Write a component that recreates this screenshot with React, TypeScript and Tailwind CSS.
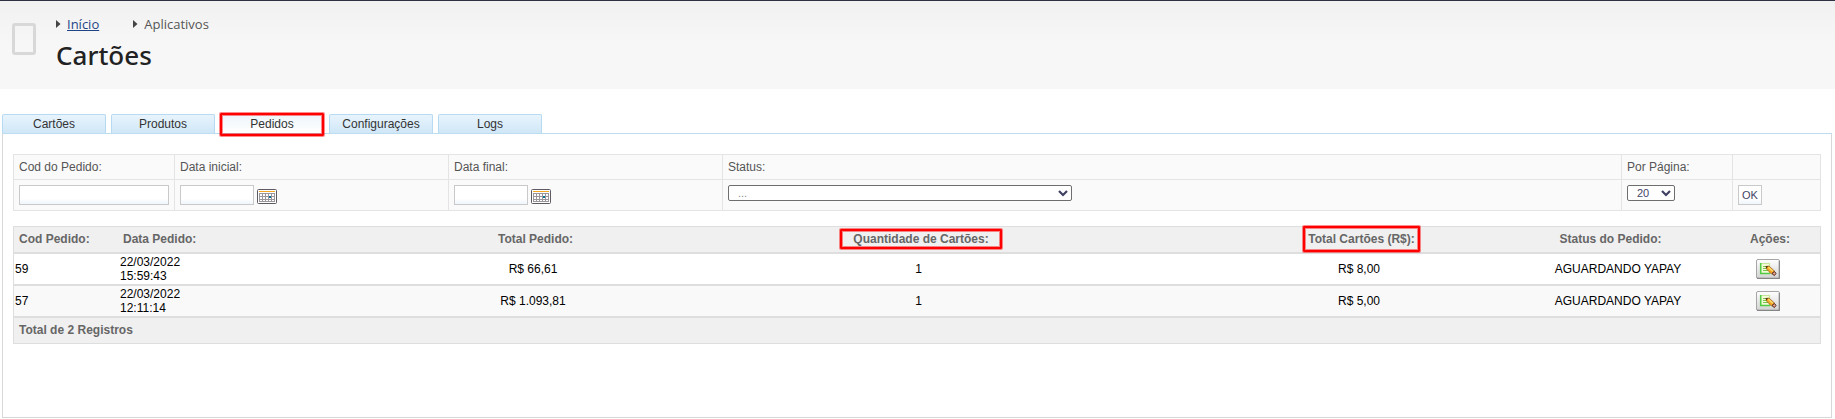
import { useState } from 'react';

const tabs = ['Cartões', 'Produtos', 'Pedidos', 'Configurações', 'Logs'];

const orders = [
  { id: '59', date: '22/03/2022', time: '15:59:43', total: 'R$ 66,61', qty: '1', cardsTotal: 'R$ 8,00', status: 'AGUARDANDO YAPAY' },
  { id: '57', date: '22/03/2022', time: '12:11:14', total: 'R$ 1.093,81', qty: '1', cardsTotal: 'R$ 5,00', status: 'AGUARDANDO YAPAY' },
];

const inputClass = 'h-5 border border-[#c9c9c9] bg-linear-to-b from-white from-70% to-[#eef6fc] px-1 text-xs text-[#444466] outline-none';
const filterHead = 'h-[25px] border border-[#e4e4e4] px-[5px] text-left align-middle font-normal';
const filterCell = 'border border-[#e4e4e4] px-[5px] py-[5px] align-top h-[31px]';

function Caret() {
  return (
    <svg viewBox="0 0 5 8" className="h-2 w-[5px] shrink-0" aria-hidden="true">
      <path d="M0 0 L4.5 4 L0 8 Z" fill="#444" />
    </svg>
  );
}

function Chevron() {
  return (
    <svg viewBox="0 0 10 7" className="pointer-events-none absolute right-1 top-[5px] h-[7px] w-[10px]" aria-hidden="true">
      <path d="M1 1 L5 5 L9 1" fill="none" stroke="#3f4162" strokeWidth="2.2" />
    </svg>
  );
}

function CalendarIcon() {
  return (
    <svg viewBox="0 0 20 15" className="h-[15px] w-5" aria-hidden="true">
      <rect x="0.5" y="0.5" width="19" height="14" rx="1" fill="#fff" stroke="#5e5a62" />
      <rect x="2" y="2" width="16" height="1" fill="#f5a623" />
      <path d="M2 4.5 H18 M2 7.5 H18 M2 10.5 H18 M2 12.5 H18 M2.5 4 V13 M5.5 4 V13 M8.5 4 V13 M11.5 4 V13 M14.5 4 V13 M17.5 4 V13" stroke="#9a969c" strokeWidth="1" />
      <rect x="12" y="7" width="2" height="2" fill="#0b6f92" />
    </svg>
  );
}

function EditIcon() {
  return (
    <svg viewBox="0 0 24 20" className="h-5 w-6" aria-hidden="true">
      <defs>
        <linearGradient id="key" x1="0" y1="0" x2="0" y2="1">
          <stop offset="0" stopColor="#fff" />
          <stop offset="1" stopColor="#d2d2d2" />
        </linearGradient>
      </defs>
      <rect x="0.5" y="0.5" width="23" height="19" rx="1.5" fill="url(#key)" stroke="#a6a6a6" />
      <path d="M1 19.3 H23.3 V2" fill="none" stroke="#858585" strokeWidth="1.2" />
      <rect x="4.5" y="4.5" width="9" height="10" fill="#f4fbd9" stroke="#c5e59a" />
      <path d="M4.7 4 V14.5 H14" fill="none" stroke="#52cc45" strokeWidth="1.6" />
      <path d="M7 7.5 H10 M7 9.5 H11 M7 11.5 H12" stroke="#7cc552" strokeWidth="1" />
      <path d="M10 7.5 L13 7 L18.6 12.2 L15.4 15 L10.6 10 Z" fill="#f2a622" stroke="#8c5413" strokeWidth="0.7" />
      <path d="M12.5 8.2 L17 12.4" stroke="#ffe27a" strokeWidth="1.2" />
      <path d="M9.4 7 L12 7.2 L10.6 9.2 Z" fill="#4d2a10" />
      <path d="M16 14.6 L18.4 12.4 L20 14.4 L18.4 16.6 Z" fill="#e8a08c" stroke="#4d2418" strokeWidth="1" />
    </svg>
  );
}

function Highlight({ className }: { className: string }) {
  return (
    <span
      aria-hidden="true"
      className={`pointer-events-none absolute rounded-[1px] border-2 border-[#ff0000] shadow-[0_0_0_1px_rgba(255,0,0,0.45),inset_0_0_0_1px_rgba(255,0,0,0.45)] ${className}`}
    />
  );
}

export default function App() {
  const [active, setActive] = useState('Pedidos');

  return (
    <div className="bg-white font-['Liberation_Sans',Arial,sans-serif] text-xs text-[#555555]">
      {/* Page header */}
      <header className="flex h-[89px] gap-5 border-t border-[#2e3142] bg-linear-to-b from-[#f1f1f1] to-[#f7f7f7] to-50% pl-3">
        <div className="mt-[22px] h-8 w-6 shrink-0 rounded-[3px] border-[3px] border-[#d8d8d8]" />
        <div className="pt-[13px]">
          <nav className="flex gap-[34px] font-['Open_Sans',sans-serif] text-[13px] leading-5">
            <span className="flex items-center gap-[6px]">
              <Caret />
              <a href="#inicio" className="text-[#1f4486] underline">Início</a>
            </span>
            <span className="flex items-center gap-[6px]">
              <Caret />
              Aplicativos
            </span>
          </nav>
          <h1 className="mt-[3px] font-['Noto_Sans','Open_Sans',sans-serif] text-[26px] leading-9 font-medium text-[#222222]">Cartões</h1>
        </div>
      </header>

      <main className="mt-[25px] mr-[3px] ml-[2px]">
        {/* Tabs */}
        <div className="flex gap-[5px]" role="tablist">
          {tabs.map((tab) => (
            <button
              key={tab}
              type="button"
              role="tab"
              aria-selected={tab === active}
              onClick={() => setActive(tab)}
              className={`relative h-[19px] w-[104px] rounded-t-[2px] border border-b-0 border-[#b5daf1] bg-linear-to-b text-xs text-[#333333] ${
                tab === active ? 'from-[#edf5fc] to-white' : 'from-[#e8f4fd] to-[#d0e7f7]'
              }`}
            >
              {tab}
              {tab === 'Pedidos' && <Highlight className="-inset-x-px -top-[2px] -bottom-[3px]" />}
            </button>
          ))}
        </div>

        <section className="min-h-[285px] border border-[#d8d8d8] border-t-[#bcdcf0] px-[10px] pt-5">
          {/* Filters */}
          <table className="w-full table-fixed border-collapse bg-[#fafafa]">
            <colgroup>
              <col className="w-[161px]" />
              <col className="w-[274px]" />
              <col className="w-[274px]" />
              <col />
              <col className="w-[111px]" />
              <col className="w-[88px]" />
            </colgroup>
            <thead>
              <tr>
                <th className={filterHead}><label htmlFor="cod">Cod do Pedido:</label></th>
                <th className={filterHead}><label htmlFor="start">Data inicial:</label></th>
                <th className={filterHead}><label htmlFor="end">Data final:</label></th>
                <th className={filterHead}><label htmlFor="status">Status:</label></th>
                <th className={filterHead}><label htmlFor="perPage">Por Página:</label></th>
                <td className={filterHead} />
              </tr>
            </thead>
            <tbody>
              <tr>
                <td className={filterCell}>
                  <input id="cod" type="text" className={`${inputClass} block w-full`} />
                </td>
                {['start', 'end'].map((id) => (
                  <td key={id} className={filterCell}>
                    <div className="flex items-end gap-[3px]">
                      <input id={id} type="text" className={`${inputClass} w-[74px]`} />
                      <button type="button" aria-label="Calendário" className="pb-px"><CalendarIcon /></button>
                    </div>
                  </td>
                ))}
                <td className={filterCell}>
                  <div className="relative w-[344px]">
                    <select id="status" className="block h-4 w-full appearance-none rounded-[2px] border border-[#6e6e6e] bg-white pl-[9px] text-[11px] leading-[14px] text-[#888888]">
                      <option>...</option>
                    </select>
                    <Chevron />
                  </div>
                </td>
                <td className={filterCell}>
                  <div className="relative w-12">
                    <select id="perPage" defaultValue="20" className="block h-4 w-full appearance-none rounded-[2px] border border-[#6e6e6e] bg-white pl-[9px] text-[11px] leading-[14px] text-[#444466]">
                      <option>20</option>
                      <option>50</option>
                    </select>
                    <Chevron />
                  </div>
                </td>
                <td className={filterCell}>
                  <button type="submit" className="block h-5 w-6 border border-[#c9c9c9] bg-linear-to-b from-white from-70% to-[#eef6fc] text-[11px] leading-[18px] text-[#444466]">
                    OK
                  </button>
                </td>
              </tr>
            </tbody>
          </table>

          {/* Orders */}
          <div className="mt-[15px] border border-[#dedede]">
            <table className="w-full table-fixed border-separate border-spacing-0">
              <colgroup>
                <col className="w-[104px]" />
                <col className="w-[308px]" />
                <col className="w-[214px]" />
                <col />
                <col className="w-[324px]" />
                <col className="w-[194px]" />
                <col className="w-[105px]" />
              </colgroup>
              <thead className="bg-[#f0f0f0] text-[#666666]">
                <tr className="h-[27px] [&>th]:border-b-2 [&>th]:border-[#dedede] [&>th]:pb-[2px] [&>th]:pl-[5px]">
                  <th className="text-left">Cod Pedido:</th>
                  <th className="text-left">Data Pedido:</th>
                  <th>Total Pedido:</th>
                  <th>
                    <span className="relative">
                      Quantidade de Cartões:
                      <Highlight className="-inset-x-[13px] -inset-y-[3px]" />
                    </span>
                  </th>
                  <th>
                    <span className="relative">
                      Total Cartões (R$):
                      <Highlight className="-inset-x-[5px] -inset-y-[6px]" />
                    </span>
                  </th>
                  <th className="pr-5">Status do Pedido:</th>
                  <th>Ações:</th>
                </tr>
              </thead>
              <tbody className="text-black">
                {orders.map((order) => (
                  <tr key={order.id} className="h-8 text-center even:bg-[#f9f9f9] [&>td]:border-b-2 [&>td]:border-[#dedede] [&>td]:p-0">
                    <td><p className="pl-px text-left">{order.id}</p></td>
                    <td>
                      <p className="pl-[2px] text-left leading-[14px]">
                        {order.date}
                        <br />
                        {order.time}
                      </p>
                    </td>
                    <td>{order.total}</td>
                    <td>{order.qty}</td>
                    <td>{order.cardsTotal}</td>
                    <td>{order.status}</td>
                    <td>
                      <button type="button" aria-label="Editar" className="block mx-auto"><EditIcon /></button>
                    </td>
                  </tr>
                ))}
              </tbody>
              <tfoot className="bg-[#f0f0f0] text-[#666666]">
                <tr className="h-[25px]">
                  <td colSpan={7} className="pb-[2px] pl-[5px] font-bold">Total de {orders.length} Registros</td>
                </tr>
              </tfoot>
            </table>
          </div>
        </section>
      </main>
    </div>
  );
}
